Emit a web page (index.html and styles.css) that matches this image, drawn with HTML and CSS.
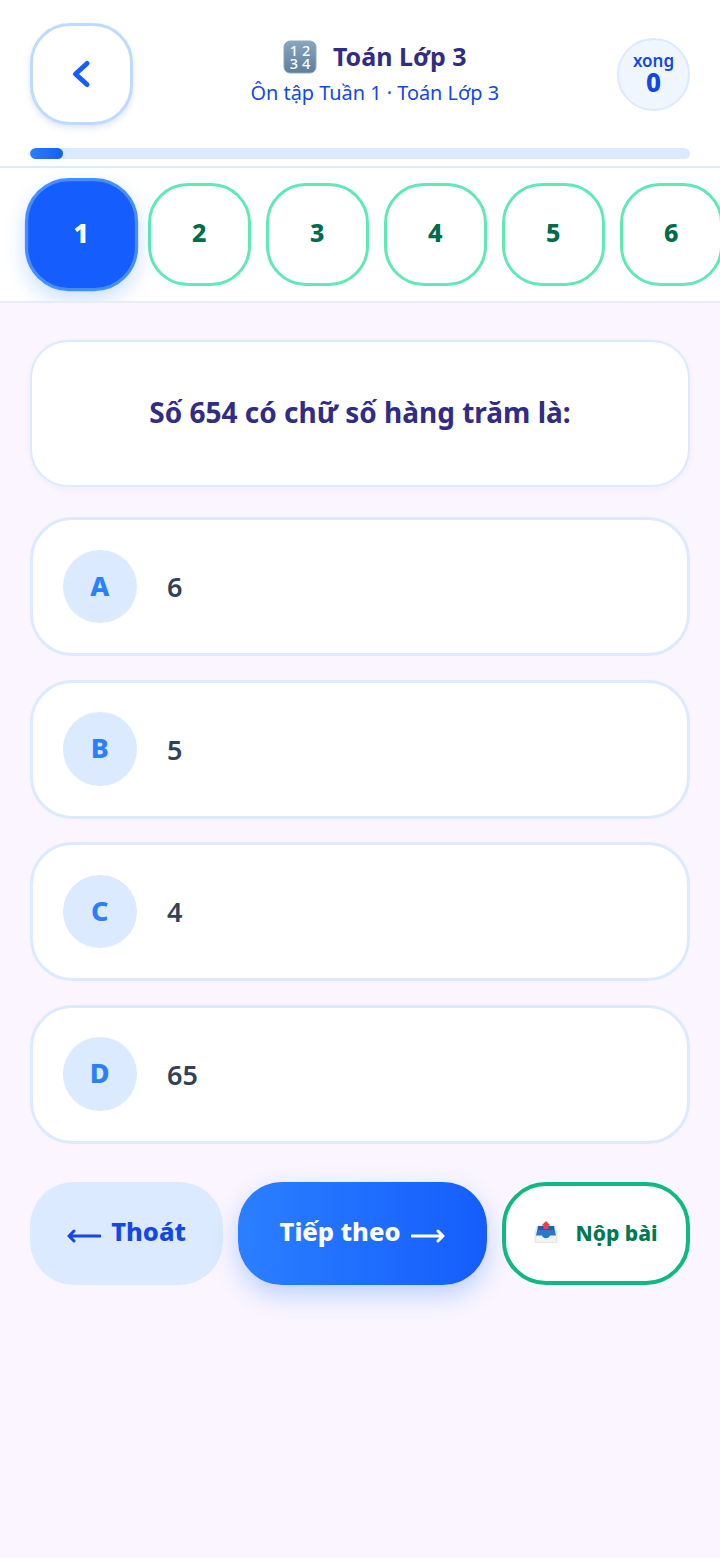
FILE: index.html
```html
<!DOCTYPE html>
<html lang="vi">
<head>
<meta charset="utf-8">
<title>Toán Lớp 3</title>
<link rel="stylesheet" href="styles.css">
</head>
<body>
<header class="top">
  <div class="top-row">
    <button class="back" aria-label="Quay lại">
      <svg class="back-icon" viewBox="0 0 24 32"><path d="M18 5.5 L6.5 16 L18 26.5"/></svg>
    </button>
    <div class="heading">
      <div class="title-line">
        <svg class="keycap" viewBox="0 0 34 34">
          <defs><linearGradient id="kc" x1="0" y1="0" x2="0" y2="1"><stop offset="0" stop-color="#8aa6be"/><stop offset="1" stop-color="#5c7d9e"/></linearGradient></defs>
          <rect x="1" y="1" width="32" height="32" rx="6" fill="url(#kc)" stroke="#93a7b9"/>
          <text x="17" y="15.5" class="keycap-text">1 2</text>
          <text x="17" y="29" class="keycap-text">3 4</text>
        </svg>
        <h1 class="title">Toán Lớp 3</h1>
      </div>
      <p class="subtitle">Ôn tập Tuần 1 · Toán Lớp 3</p>
    </div>
    <div class="done">
      <span class="done-label">xong</span>
      <span class="done-count">0</span>
    </div>
  </div>
  <div class="progress"><div class="progress-fill"></div></div>
</header>

<nav class="strip">
  <button class="pill pill-active">1</button>
  <button class="pill">2</button>
  <button class="pill">3</button>
  <button class="pill">4</button>
  <button class="pill">5</button>
  <button class="pill">6</button>
</nav>

<main class="content">
  <section class="question">Số 654 có chữ số hàng trăm là:</section>
  <div class="options">
    <div class="option"><span class="letter">A</span><span class="answer">6</span></div>
    <div class="option"><span class="letter">B</span><span class="answer">5</span></div>
    <div class="option"><span class="letter">C</span><span class="answer">4</span></div>
    <div class="option"><span class="letter">D</span><span class="answer">65</span></div>
  </div>
  <div class="actions">
    <button class="btn btn-exit">
      <svg class="arrow" viewBox="0 0 34 14"><path d="M33 7 H2 M7 2 L2 7 L7 12"/></svg>
      <span class="btn-label">Thoát</span>
    </button>
    <button class="btn btn-next">
      <span class="btn-label">Tiếp theo</span>
      <svg class="arrow" viewBox="0 0 34 14"><path d="M1 7 H32 M27 2 L32 7 L27 12"/></svg>
    </button>
    <button class="btn btn-submit">
      <svg class="tray" viewBox="0 0 24 22">
        <path d="M1 12 L3 5 H21 L23 12 V21.5 H1 Z" fill="#f1f3f5" stroke="#d5dade" stroke-width=".6"/>
        <path d="M2 14.5 L4 5 H20 L22 14.5 H16 C15 18 9 18 8 14.5 Z" fill="#2a78cc"/>
        <path d="M4 9 H20 L20 5 H4 Z" fill="#1f5fae"/>
        <path d="M12 0 L16.5 4.5 H14.5 V8 H9.5 V4.5 H7.5 Z" fill="#e8404a"/>
      </svg>
      <span class="btn-label">Nộp bài</span>
    </button>
  </div>
</main>
</body>
</html>
```

FILE: styles.css
```css
* { box-sizing: border-box; }

html, body { margin: 0; padding: 0; }

body {
  min-height: 1558px;
  background: #faf5ff;
  font-family: "Noto Sans", "Open Sans", sans-serif;
  color: #314158;
  overflow-x: hidden;
}

button { font-family: inherit; padding: 0; cursor: pointer; }

.top {
  background: #fff;
  padding: 23px 30px 7px;
  border-bottom: 2px solid #dbeafe;
}

.top-row {
  display: flex;
  align-items: center;
  justify-content: space-between;
}

.back {
  width: 102.5px;
  height: 102px;
  flex: none;
  display: flex;
  align-items: center;
  justify-content: center;
  background: #fff;
  border: 3.5px solid #bedbff;
  border-radius: 40px;
  box-shadow: 0 3px 6px rgba(30, 80, 160, .14);
}

.back-icon { width: 24px; height: 32px; fill: none; stroke: #155dfc; stroke-width: 5; stroke-linecap: round; stroke-linejoin: round; }

.heading { flex: 1; text-align: center; }

.title-line {
  display: flex;
  align-items: center;
  justify-content: center;
  gap: 16px;
  margin-top: -3px;
}

.keycap { width: 34px; height: 34px; flex: none; }

.keycap-text { font-size: 14.5px; font-weight: 500; fill: #fff; text-anchor: middle; }

.title {
  margin: -2px 0 0;
  font-size: 25px;
  line-height: 34px;
  font-weight: 700;
  color: #312c85;
}

.subtitle {
  margin: 6px 0 0;
  font-size: 19.9px;
  line-height: 26px;
  color: #1447e6;
}

.done {
  width: 73px;
  height: 73px;
  flex: none;
  display: flex;
  flex-direction: column;
  align-items: center;
  justify-content: center;
  background: #eff6ff;
  border: 2px solid #dbeafe;
  border-radius: 50%;
  color: #1447e6;
}

.done-label { font-size: 17px; line-height: 18px; font-weight: 600; margin-top: -2px; }

.done-count { font-size: 26px; line-height: 24px; font-weight: 800; }

.progress {
  height: 11px;
  margin-top: 23px;
  border-radius: 6px;
  background: #dbeafe;
  overflow: hidden;
}

.progress-fill {
  width: 33px;
  height: 100%;
  border-radius: 6px;
  background: linear-gradient(90deg, #2b7fff, #155dfc);
}

.strip {
  display: flex;
  gap: 15.5px;
  padding: 15px 30px 15px;
  background: #fff;
  border-bottom: 2px solid #e6ecf8;
  overflow: hidden;
  height: 135px;
}

.pill {
  width: 102.5px;
  height: 102.5px;
  flex: none;
  padding-bottom: 4px;
  background: #fff;
  border: 3.5px solid #5ee9b5;
  border-radius: 40px;
  font-size: 25px;
  font-weight: 800;
  color: #006c4c;
}

.pill-active {
  background: #155dfc;
  border-color: #468efc;
  color: #fff;
  transform: scale(1.1);
  box-shadow: 0 8px 18px rgba(43, 127, 255, .24);
}

.content { padding: 37px 30px 0; }

.question {
  height: 147px;
  display: flex;
  align-items: center;
  justify-content: center;
  padding-bottom: 4px;
  background: #fff;
  border: 2px solid #dbeafe;
  border-radius: 38px;
  box-shadow: 0 2px 6px rgba(60, 90, 160, .05);
  font-size: 28px;
  font-weight: 700;
  color: #312c85;
}

.options {
  display: flex;
  flex-direction: column;
  gap: 23.5px;
  margin-top: 30px;
}

.option {
  height: 139px;
  display: flex;
  align-items: center;
  gap: 30.5px;
  padding: 0 30px;
  background: #fff;
  border: 3.5px solid #dbeafe;
  border-radius: 42px;
}

.letter {
  width: 73.5px;
  height: 73.5px;
  flex: none;
  display: flex;
  align-items: center;
  justify-content: center;
  padding-bottom: 3px;
  border-radius: 50%;
  background: #dbeafe;
  font-size: 27px;
  font-weight: 800;
  color: #2b7fff;
}

.answer { font-size: 27px; font-weight: 600; color: #314158; }

.actions {
  display: grid;
  grid-template-columns: 193px 249px 188px;
  gap: 15px;
  margin-top: 38.5px;
}

.btn {
  height: 103px;
  display: flex;
  align-items: center;
  justify-content: center;
  border-radius: 44px;
  border: 0;
  font-size: 25.5px;
  font-weight: 800;
}

.btn-label { padding-bottom: 6px; }

.arrow { width: 34px; height: 14px; flex: none; fill: none; stroke: currentColor; stroke-width: 3; stroke-linecap: round; stroke-linejoin: round; margin-top: 4px; }

.btn-exit { gap: 10px; background: #dbeafe; color: #1447e6; }

.btn-next {
  gap: 11px;
  background: linear-gradient(90deg, #2b7fff, #155dfc);
  color: #fff;
  box-shadow: 0 10px 24px rgba(43, 127, 255, .3);
}

.btn-submit {
  gap: 17px;
  background: #fff;
  border: 4px solid #10b981;
  color: #007a55;
  font-size: 21px;
}

.btn-submit .btn-label { padding-bottom: 2px; }

.tray { width: 24px; height: 22px; flex: none; margin-top: -3px; }
```
